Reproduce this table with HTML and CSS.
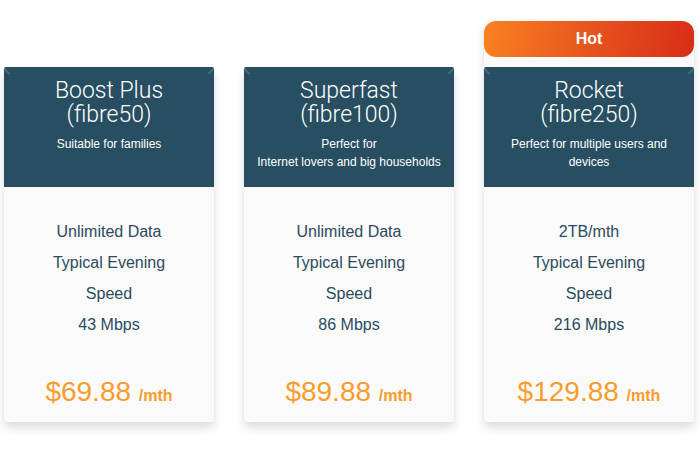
FILE: index.html
```html
<!DOCTYPE html>
<html>
<head>
<meta charset="utf-8">
<link rel="stylesheet" href="styles.css">
</head>
<body>
<div class="plans">
  <div class="card">
    <div class="head">
      <span class="corner corner-l"></span><span class="corner corner-r"></span>
      <div class="title">Boost Plus<br>(fibre50)</div>
      <div class="sub">Suitable for families</div>
    </div>
    <div class="body">
      <ul class="features">
        <li>Unlimited Data</li>
        <li>Typical Evening</li>
        <li>Speed</li>
        <li>43 Mbps</li>
      </ul>
      <div class="price">$69.88 <span class="per">/mth</span></div>
    </div>
  </div>
  <div class="card">
    <div class="head">
      <span class="corner corner-l"></span><span class="corner corner-r"></span>
      <div class="title">Superfast<br>(fibre100)</div>
      <div class="sub">Perfect for<br>Internet lovers and big households</div>
    </div>
    <div class="body">
      <ul class="features">
        <li>Unlimited Data</li>
        <li>Typical Evening</li>
        <li>Speed</li>
        <li>86 Mbps</li>
      </ul>
      <div class="price">$89.88 <span class="per">/mth</span></div>
    </div>
  </div>
  <div class="card card-hot">
    <div class="badge">Hot</div>
    <div class="head">
      <span class="corner corner-l"></span><span class="corner corner-r"></span>
      <div class="title">Rocket<br>(fibre250)</div>
      <div class="sub">Perfect for multiple users and<br>devices</div>
    </div>
    <div class="body">
      <ul class="features">
        <li>2TB/mth</li>
        <li>Typical Evening</li>
        <li>Speed</li>
        <li>216 Mbps</li>
      </ul>
      <div class="price">$129.88 <span class="per">/mth</span></div>
    </div>
  </div>
</div>
</body>
</html>
```
FILE: styles.css
```css
html, body {
  margin: 0;
  padding: 0;
  background: #ffffff;
}
body {
  width: 700px;
  height: 452px;
  overflow: hidden;
  font-family: "Liberation Sans", Arial, sans-serif;
}
.plans {
  display: flex;
  align-items: flex-end;
  gap: 30px;
  padding: 21px 0 0 4px;
}
.card {
  width: 210px;
  background: #fafafa;
  border-radius: 3px;
  box-shadow: 0 6px 10px rgba(0, 0, 0, 0.13), 0 0 3px rgba(0, 0, 0, 0.05);
  display: flex;
  flex-direction: column;
}
.badge {
  height: 36px;
  line-height: 36px;
  border-radius: 12px;
  background: linear-gradient(100deg, #f9821f 0%, #e5501e 55%, #d82d17 100%);
  color: #fff;
  font-weight: bold;
  font-size: 16px;
  text-align: center;
  margin-bottom: 10px;
}
.head {
  position: relative;
  height: 120px;
  box-sizing: border-box;
  background: #274e61;
  color: #fff;
  text-align: center;
  padding-top: 12px;
  border-radius: 2px 2px 0 0;
}
.corner {
  position: absolute;
  top: 0;
  width: 7px;
  height: 7px;
  background-image: radial-gradient(circle, rgba(255,255,255,0.22) 0.6px, transparent 1px);
  background-size: 2px 2px;
}
.corner-l {
  left: 0;
  clip-path: polygon(0 0, 100% 100%, 60% 100%, 0 40%);
}
.corner-r {
  right: 0;
  clip-path: polygon(100% 0, 0 100%, 40% 100%, 100% 40%);
}
.title {
  font-family: Roboto, "Liberation Sans", sans-serif;
  font-weight: 300;
  font-size: 23px;
  line-height: 24px;
}
.sub {
  margin-top: 8px;
  font-size: 12px;
  line-height: 18px;
}
.body {
  height: 235px;
  box-sizing: border-box;
  padding-top: 29px;
  text-align: center;
  display: flex;
  flex-direction: column;
}
.features {
  list-style: none;
  margin: 0;
  padding: 0;
  color: #2b4a5c;
  font-size: 16px;
  line-height: 31px;
}
.price {
  margin-top: 32px;
  color: #f89c2c;
  font-size: 28px;
  line-height: 40px;
}
.per {
  font-size: 16px;
  font-weight: bold;
}
```
